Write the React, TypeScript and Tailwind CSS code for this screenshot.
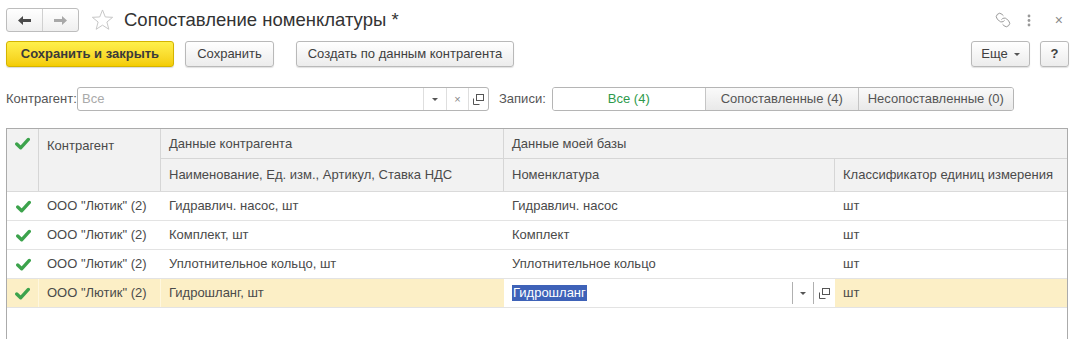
import { Link } from "lucide-react";

const font = { fontFamily: '"Liberation Sans", Arial, sans-serif' };

function Check() {
  return (
    <svg width="15" height="13" viewBox="0 0 16 14">
      <path
        d="M1.8 7.5 L6 11.6 L14.3 2.6"
        fill="none"
        stroke="#3ca34c"
        strokeWidth="3.6"
        strokeLinecap="round"
        strokeLinejoin="round"
      />
    </svg>
  );
}

function CopyIcon() {
  return (
    <svg width="11" height="11" viewBox="0 0 11 11">
      <rect x="3.5" y="0.5" width="7" height="6" fill="none" stroke="#555" />
      <path d="M0.5 4.5 V10.5 H6.5" fill="none" stroke="#555" />
    </svg>
  );
}

function Arrow() {
  return <span className="block w-0 h-0 border-l-[3px] border-r-[3px] border-t-[3px] border-l-transparent border-r-transparent border-t-[#555]" />;
}

const btn =
  "h-[26px] rounded-[3px] border border-[#b9b9b9] bg-gradient-to-b from-white to-[#ececec] shadow-[0_1px_1px_rgba(0,0,0,0.12)] text-[13px] text-[#404040] flex items-center justify-center whitespace-nowrap";

const rows = [
  { name: "Гидравлич. насос, шт", base: "Гидравлич. насос" },
  { name: "Комплект, шт", base: "Комплект" },
  { name: "Уплотнительное кольцо, шт", base: "Уплотнительное кольцо" },
  { name: "Гидрошланг, шт", base: "Гидрошланг", active: true },
];

export default function App() {
  return (
    <div className="h-[339px] overflow-hidden bg-white px-[6px] pt-[8px]" style={font}>
      {/* Заголовок */}
      <div className="h-[24px] flex items-center">
        <div className="flex h-[24px] rounded-[3px] border border-[#bdbdbd] bg-gradient-to-b from-white to-[#efefef]">
          <div className="w-[36px] flex items-center justify-center border-r border-[#d0d0d0]">
            <svg width="13" height="9" viewBox="0 0 13 9">
              <path d="M0 4.5 L5 0 V3 H13 V6 H5 V9 Z" fill="#4a4a4a" />
            </svg>
          </div>
          <div className="w-[35px] flex items-center justify-center">
            <svg width="13" height="9" viewBox="0 0 13 9">
              <path d="M13 4.5 L8 0 V3 H0 V6 H8 V9 Z" fill="#a8a8a8" />
            </svg>
          </div>
        </div>
        <svg className="ml-[12px]" width="23" height="22" viewBox="0 0 24 23">
          <path
            d="M12 1 L14.9 8.3 L22.6 8.7 L16.6 13.6 L18.6 21.2 L12 16.9 L5.4 21.2 L7.4 13.6 L1.4 8.7 L9.1 8.3 Z"
            fill="none"
            stroke="#c4c4c4"
            strokeWidth="1"
          />
        </svg>
        <div className="ml-[10px] text-[18.5px] text-[#333] leading-none">Сопоставление номенклатуры *</div>
        <div className="ml-auto flex items-center gap-[16px] pr-[14px] text-[#8a8a8a]">
          <Link size={16} strokeWidth={1.3} className="-scale-x-100" />
          <svg width="4" height="13" viewBox="0 0 4 13">
            <circle cx="2" cy="2" r="1.4" fill="#999" />
            <circle cx="2" cy="6.5" r="1.4" fill="#999" />
            <circle cx="2" cy="11" r="1.4" fill="#999" />
          </svg>
          <span className="text-[14px] ml-[8px]">×</span>
        </div>
      </div>

      {/* Панель кнопок */}
      <div className="mt-[9px] h-[26px] flex items-center">
        <button className="h-[26px] w-[168px] rounded-[3px] border border-[#d4b400] bg-gradient-to-b from-[#fff04a] to-[#f4cc00] shadow-[0_1px_1px_rgba(0,0,0,0.15)] text-[13px] font-bold text-[#3a3a3a] flex items-center justify-center whitespace-nowrap">
          Сохранить и закрыть
        </button>
        <button className={btn + " ml-[11px] w-[89px]"}>Сохранить</button>
        <button className={btn + " ml-[22px] w-[218px]"}>Создать по данным контрагента</button>
        <button className={btn + " ml-auto w-[59px] gap-[6px]"}>
          Еще <Arrow />
        </button>
        <button className={btn + " ml-[10px] mr-[8px] w-[29px] font-bold"}>?</button>
      </div>

      {/* Отбор */}
      <div className="mt-[20px] h-[24px] flex items-center text-[13px]">
        <span className="text-[#555] w-[71px]">Контрагент:</span>
        <div className="w-[412px] h-[24px] flex rounded-[3px] border border-[#b5b5b5]">
          <span className="flex-1 pl-[4px] flex items-center text-[#aaa]">Все</span>
          <span className="w-[23px] flex items-center justify-center border-l border-[#dedede]">
            <Arrow />
          </span>
          <span className="w-[22px] flex items-center justify-center border-l border-[#dedede] text-[#888] text-[11px]">×</span>
          <span className="w-[20px] flex items-center justify-center border-l border-[#dedede]">
            <CopyIcon />
          </span>
        </div>
        <span className="ml-[10px] text-[#555]">Записи:</span>
        <div className="ml-[6px] h-[24px] flex rounded-[3px] border border-[#b5b5b5] overflow-hidden">
          <span className="w-[152px] flex items-center justify-center bg-white text-[#2e9a4c]">Все (4)</span>
          <span className="w-[153px] flex items-center justify-center border-l border-[#c5c5c5] bg-gradient-to-b from-[#fafafa] to-[#e9e9e9] text-[#555]">
            Сопоставленные (4)
          </span>
          <span className="w-[155px] flex items-center justify-center border-l border-[#c5c5c5] bg-gradient-to-b from-[#fafafa] to-[#e9e9e9] text-[#555]">
            Несопоставленные (0)
          </span>
        </div>
      </div>

      {/* Таблица */}
      <div className="mt-[17px] w-[1062px] border border-[#ababab] text-[13px] text-[#4a4a4a]">
        <div className="grid grid-cols-[32px_122px_343px_331px_1fr] grid-rows-[30px_32px] bg-[#f2f2f2] border-b border-[#dadada]">
          <div className="row-span-2 border-r border-[#d6d6d6] flex justify-center pt-[8px]">
            <Check />
          </div>
          <div className="row-span-2 border-r border-[#d6d6d6] pl-[8px] pt-[7px]">Контрагент</div>
          <div className="border-r border-b border-[#d6d6d6] pl-[8px] flex items-center">Данные контрагента</div>
          <div className="col-span-2 border-b border-[#d6d6d6] pl-[8px] flex items-center">Данные моей базы</div>
          <div className="border-r border-[#d6d6d6] pl-[8px] flex items-center">Наименование, Ед. изм., Артикул, Ставка НДС</div>
          <div className="border-r border-[#d6d6d6] pl-[8px] flex items-center">Номенклатура</div>
          <div className="pl-[8px] flex items-center">Классификатор единиц измерения</div>
        </div>
        {rows.map((r) => (
          <div
            key={r.name}
            className={
              "grid grid-cols-[32px_122px_343px_331px_1fr] h-[29px] border-b border-[#e3e3e3] " +
              (r.active ? "bg-[#fcefc6]" : "bg-white")
            }
          >
            <div className={"flex items-center justify-center" + (r.active ? " border-r border-[#fff7de]" : "")}>
              <Check />
            </div>
            <div className={"pl-[8px] flex items-center" + (r.active ? " border-r border-[#fff7de]" : "")}>ООО "Лютик" (2)</div>
            <div className="pl-[8px] flex items-center">{r.name}</div>
            {r.active ? (
              <div className="bg-white flex items-center">
                <span className="ml-[8px] bg-[#3e62b8] text-white leading-[16px] px-[1px]">{r.base}</span>
                <span className="ml-auto h-[22px] border-l border-[#b0b0b0] w-[21px] flex items-center justify-center">
                  <Arrow />
                </span>
                <span className="h-[22px] border-l border-[#b0b0b0] w-[22px] flex items-center justify-center">
                  <CopyIcon />
                </span>
              </div>
            ) : (
              <div className="pl-[8px] flex items-center">{r.base}</div>
            )}
            <div className="pl-[8px] flex items-center">шт</div>
          </div>
        ))}
        <div className="h-[60px]" />
      </div>
    </div>
  );
}
